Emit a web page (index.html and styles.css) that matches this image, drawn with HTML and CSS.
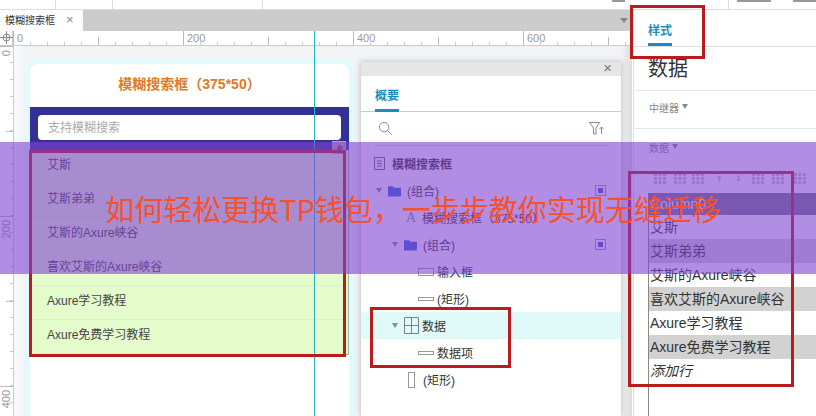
FILE: index.html
```html
<!DOCTYPE html>
<html lang="en">
<head>
  <meta charset="UTF-8" />
  <title>模糊搜索框</title>
  <link rel="stylesheet" href="styles.css">
</head>
<body>
  <svg class="defs" width="0" height="0">
    <symbol id="cells" viewBox="0 0 12 11">
      <path d="M0 0h3v3H0zM4.500 0h3v3h-3zM9 0h3v3H9zM0 4h3v3H0zM4.500 4h3v3h-3zM9 4h3v3H9zM0 8h3v3H0zM4.500 8h3v3h-3zM9 8h3v3H9z" fill="currentColor"/>
    </symbol>
    <symbol id="folder" viewBox="0 0 14 12">
      <path d="M0 1h5l2 1.500h7V12H0z" fill="#2f62d8"/>
    </symbol>
    <symbol id="marker" viewBox="0 0 11 11">
      <rect x="0.500" y="0.500" width="10" height="10" fill="#fff" stroke="#9a9ab0"/>
      <rect x="3" y="3" width="5" height="5" fill="#3d56c8"/>
    </symbol>
  </svg>

  <div class="topstrip">
    <i class="mark m1"></i><i class="mark m2"></i><i class="mark m3"></i>
  </div>

  <div class="workspace">

    <!-- editor side -->
    <div class="editor">
      <div class="tabbar">
        <div class="tab">模糊搜索框<span class="tab-close">×</span></div>
        <span class="tri tab-menu"></span>
      </div>
      <div class="hruler">
        <div class="corner">
          <svg width="13" height="13" viewBox="0 0 13 13"><circle cx="6.500" cy="6.500" r="3.500" fill="none" stroke="#888"/><path d="M6.500 0v13M0 6.500h13" stroke="#888"/></svg>
        </div>
        <div class="hseg">0</div>
        <div class="hseg">200</div>
        <div class="hseg">400</div>
        <div class="hseg">600</div>
      </div>
      <div class="canvas-row">
        <div class="vruler">
          <div class="vseg"><span>0</span></div>
          <div class="vseg"><span>200</span></div>
          <div class="vseg"><span>400</span></div>
        </div>
        <div class="stage">
          <div class="phone">
            <div class="phone-title">模糊搜索框（375*50）</div>
            <div class="searchbar">
              <div class="searchbox">支持模糊搜索</div>
            </div>
            <div class="rows">
              <div class="row">艾斯</div>
              <div class="row">艾斯弟弟</div>
              <div class="row">艾斯的Axure峡谷</div>
              <div class="row">喜欢艾斯的Axure峡谷</div>
              <div class="row">Axure学习教程</div>
              <div class="row">Axure免费学习教程</div>
            </div>
          </div>
        </div>
      </div>
    </div>

    <!-- style panel -->
    <div class="inspector">
      <div class="insp-tabs"><span class="insp-tab">样式</span></div>
      <div class="insp-title">数据</div>
      <div class="insp-section">中继器<span class="tri"></span></div>
      <div class="insp-data">
        <div class="insp-label">数据<span class="tri"></span></div>
        <div class="tools">
          <svg class="c1"><use href="#cells"/></svg>
          <svg class="c1"><use href="#cells"/></svg>
          <svg class="c2 tight"><use href="#cells"/></svg>
          <svg class="arrow" viewBox="0 0 9 12"><path d="M4.500 0L9 5H6v7H3V5H0z" fill="currentColor"/></svg>
          <svg class="arrow" viewBox="0 0 9 12"><path d="M4.500 12L9 7H6V0H3v7H0z" fill="currentColor"/></svg>
          <svg class="c1"><use href="#cells"/></svg>
          <svg class="c1"><use href="#cells"/></svg>
          <svg class="c2"><use href="#cells"/></svg>
          <svg class="c1"><use href="#cells"/></svg>
        </div>
        <div class="grid">
          <div class="grid-head">Column0</div>
          <div class="grid-row">艾斯</div>
          <div class="grid-row alt">艾斯弟弟</div>
          <div class="grid-row">艾斯的Axure峡谷</div>
          <div class="grid-row alt">喜欢艾斯的Axure峡谷</div>
          <div class="grid-row">Axure学习教程</div>
          <div class="grid-row alt">Axure免费学习教程</div>
          <div class="grid-row add">添加行</div>
        </div>
      </div>
    </div>
  </div>

  <!-- things lying over the page -->
  <div class="guide"></div>
  <div class="pin">
    <svg width="10" height="10" viewBox="0 0 10 10"><path d="M5 1l4 3-2 1-1 3-3-3 1-2zM3 7L1 9" fill="#6d5a66" stroke="#6d5a66"/></svg>
  </div>

  <div class="outline">
    <div class="outline-bar"><span class="outline-close">×</span></div>
    <div class="outline-tabs"><span class="outline-tab">概要</span></div>
    <div class="outline-search">
      <svg width="15" height="15" viewBox="0 0 16 16"><circle cx="6.500" cy="6.500" r="5" fill="none" stroke="#888"/><path d="M10.500 10.500l4.500 4.500" stroke="#888"/></svg>
      <svg width="15" height="13" viewBox="0 0 15 13"><path d="M0.500 0.500h10L7 6v6H4.500V6z" fill="none" stroke="#888"/><path d="M12.500 12V5M10.500 7l2-2 2 2" fill="none" stroke="#888"/></svg>
    </div>
    <div class="tree">
      <div class="node page">
        <svg class="ico" width="11" height="13" viewBox="0 0 11 13"><path d="M0.500 0.500h10v12H0.500zM3 4h5M3 6.500h5M3 9h5" fill="none" stroke="#666"/></svg>
        模糊搜索框
      </div>
      <div class="node d1"><span class="tri"></span><svg class="folder"><use href="#folder"/></svg>(组合)<svg class="marker"><use href="#marker"/></svg></div>
      <div class="node d2"><span class="letter">A</span>模糊搜索框（375*50）</div>
      <div class="node d3"><span class="tri"></span><svg class="folder"><use href="#folder"/></svg>(组合)<svg class="marker"><use href="#marker"/></svg></div>
      <div class="node d4"><span class="rect tall"></span>输入框</div>
      <div class="node d4"><span class="rect"></span>(矩形)</div>
      <div class="node d3 picked"><span class="tri"></span>
        <svg class="ico" width="15" height="17" viewBox="0 0 15 17"><path d="M0.500 0.500h14v16H0.500zM7.500 0.500v16M0.500 8.500h14" fill="none" stroke="#6f8585"/></svg>
        数据
      </div>
      <div class="node d4"><span class="rect"></span>数据项</div>
      <div class="node d1b"><span class="rect upright"></span>(矩形)</div>
    </div>
  </div>

  <div class="redbox box-rows"></div>
  <div class="redbox box-tree"></div>
  <div class="redbox box-tab"></div>
  <div class="redbox box-grid"></div>

  <div class="band">如何轻松更换TP钱包，一步步教你实现无缝迁移</div>
</body>
</html>
```

FILE: styles.css
```css
* {
  margin: 0;
  padding: 0;
  box-sizing: border-box;
}

html, body {
  width: 816px;
  height: 416px;
  overflow: hidden;
}

body {
  position: relative;
  background: #fff;
  color: #333;
  font-family: "Liberation Sans", "Noto Sans CJK SC", sans-serif;
  font-size: 12px;
}

.defs {
  position: absolute;
}

.tri {
  display: inline-block;
  width: 0;
  height: 0;
  border-left: 3px solid transparent;
  border-right: 3px solid transparent;
  border-top: 5px solid #888;
}

/* top strip */
.topstrip {
  position: relative;
  height: 10px;
  border-bottom: 1px solid #ddd;
  background:
    linear-gradient(#ddd, #ddd) 55px 0 / 1px 100% no-repeat,
    linear-gradient(#ddd, #ddd) 112px 0 / 1px 100% no-repeat,
    linear-gradient(#ddd, #ddd) 262px 0 / 1px 100% no-repeat,
    linear-gradient(#ddd, #ddd) 728px 0 / 1px 100% no-repeat;
}

.mark {
  position: absolute;
  top: 0;
  height: 2px;
  background: #999;
}

.m1 { left: 612px; width: 13px; }
.m2 { left: 737px; width: 34px; }
.m3 { left: 793px; width: 23px; }

.workspace {
  display: flex;
  height: 406px;
}

/* editor */
.editor {
  width: 632px;
  display: flex;
  flex-direction: column;
}

.tabbar {
  height: 21px;
  flex: none;
  display: flex;
  align-items: center;
  justify-content: space-between;
  background: #ccc;
  padding-right: 4px;
}

.tab {
  width: 83px;
  height: 21px;
  background: #fff;
  padding-left: 5px;
  font-size: 10px;
  line-height: 20px;
  color: #333;
}

.tab-close {
  margin-left: 11px;
  font-size: 13px;
  color: #888;
}

.tab-menu {
  border-left-width: 4px;
  border-right-width: 4px;
  border-top-color: #888;
}

.hruler {
  height: 15px;
  flex: none;
  display: flex;
  overflow: hidden;
  border-bottom: 1px solid #ccc;
  font-size: 11px;
  line-height: 14px;
  color: #999;
}

.corner {
  width: 13px;
  flex: none;
  border-right: 1px solid #ccc;
}

.hseg {
  width: 170px;
  flex: none;
  padding-left: 4px;
  background:
    linear-gradient(#bbb, #bbb) 0 0 / 1px 100% no-repeat,
    linear-gradient(#bbb, #bbb) 85px 6px / 1px 100% no-repeat,
    repeating-linear-gradient(90deg, #ccc 0 1px, transparent 1px 17px) 0 11px / 100% 4px no-repeat;
}

.canvas-row {
  flex: 1;
  display: flex;
  min-height: 0;
}

.vruler {
  width: 14px;
  flex: none;
  overflow: hidden;
  border-right: 1px solid #ccc;
  font-size: 11px;
  color: #999;
}

.vseg {
  height: 170px;
  padding-top: 4px;
  background:
    linear-gradient(#bbb, #bbb) 0 0 / 100% 1px no-repeat,
    linear-gradient(#bbb, #bbb) 6px 85px / 100% 1px no-repeat,
    repeating-linear-gradient(0deg, #ccc 0 1px, transparent 1px 17px) 10px 0 / 3px 100% no-repeat;
}

.vseg span {
  display: block;
  writing-mode: vertical-rl;
  transform: rotate(180deg);
  line-height: 12px;
}

.stage {
  flex: 1;
  min-width: 0;
  overflow: hidden;
  padding: 18px 0 0 16px;
  background: linear-gradient(90deg, #f9fafc, #f2f3f6 10px);
}

.phone {
  width: 319px;
  height: 400px;
  background: #fff;
  border-radius: 8px 8px 0 0;
  box-shadow: 0 0 0 5px #e0fbfb;
}

.phone-title {
  height: 43px;
  padding-top: 11px;
  text-align: center;
  font-size: 14px;
  font-weight: bold;
  line-height: 18px;
  color: #e17a25;
}

.searchbar {
  height: 43px;
  padding: 8px;
  background: #323296;
}

.searchbox {
  height: 25px;
  padding-left: 10px;
  background: #fff;
  border-radius: 4px;
  font-size: 12px;
  line-height: 26px;
  color: #aaa;
}

.rows {
  border: 1px solid #a8b0a0;
  border-top: none;
  border-left: none;
}

.row {
  height: 34px;
  padding-left: 17px;
  background: #e4fccc;
  border-bottom: 1px solid #dcf3c6;
  font-size: 12px;
  line-height: 30px;
  color: #444;
}

/* style panel */
.inspector {
  width: 184px;
  padding-left: 1px;
  background: linear-gradient(#ddd, #ddd) 1px 0 / 1px 100% no-repeat #fff;
  position: relative;
}

.inspector::before {
  content: "";
  position: absolute;
  left: -11px;
  top: 36px;
  bottom: 0;
  width: 11px;
  background: linear-gradient(90deg, #f2f3f6, #dcdcde);
}

.insp-tabs {
  height: 37px;
  padding: 12px 0 0 15px;
  border-bottom: 1px solid #ddd;
}

.insp-tab {
  display: inline-block;
  height: 24px;
  width: 24px;
  border-bottom: 3px solid #1a8dc0;
  font-size: 12px;
  font-weight: bold;
  line-height: 18px;
  color: #1a8dc0;
}

.insp-title {
  height: 44px;
  padding-left: 15px;
  border-bottom: 1px solid #e3e6ea;
  font-size: 20px;
  line-height: 44px;
  color: #333;
}

.insp-section {
  height: 38px;
  padding-left: 16px;
  border-bottom: 1px solid #e3e6ea;
  font-size: 10px;
  line-height: 36px;
  color: #888;
}

.insp-section .tri,
.insp-label .tri {
  margin: 0 0 3px 3px;
}

.insp-data {
  padding-left: 15px;
}

.insp-label {
  height: 39px;
  padding: 12px 0 0 1px;
  font-size: 10px;
  line-height: 16px;
  color: #888;
}

.tools {
  height: 25px;
  display: flex;
  gap: 8px;
  padding: 5px 0 0 6px;
  overflow: hidden;
  color: #c4c4c8;
}

.tools svg {
  flex: none;
  height: 11px;
}

.c1 { width: 12px; }
.c2 { width: 16px; }
.c2.tight { margin-left: -4px; }

.tools .arrow {
  width: 5px;
  margin: 0 3px;
}

.grid {
  height: 230px;
  border-left: 1px solid #888;
}

.grid-head {
  height: 22px;
  padding-left: 1px;
  background: #707a88;
  font-size: 14px;
  line-height: 22px;
  color: #fff;
}

.grid-row {
  height: 24px;
  padding-left: 1px;
  font-size: 14px;
  line-height: 24px;
  color: #333;
}

.grid-row.alt {
  background: #d2d2d2;
}

.grid-row.add {
  font-style: italic;
}

/* overlays */
.guide {
  position: absolute;
  left: 314px;
  top: 31px;
  bottom: 0;
  width: 1px;
  background: #2ab5c5;
}

.pin {
  position: absolute;
  left: 332px;
  top: 141px;
  width: 14px;
  height: 13px;
  padding: 2px;
  background: #b8a4a8;
}

.outline {
  position: absolute;
  left: 361px;
  top: 62px;
  width: 260px;
  height: 354px;
  background: #fff;
  box-shadow: 0 0 6px rgba(0, 0, 0, 0.25);
}

.outline-bar {
  height: 14px;
  background: #e6e6e6;
  text-align: right;
  padding-right: 9px;
  font-size: 15px;
  line-height: 12px;
  color: #777;
}

.outline-tabs {
  height: 36px;
  padding: 12px 0 0 14px;
  border-bottom: 1px solid #ccc;
}

.outline-tab {
  display: inline-block;
  width: 24px;
  height: 24px;
  border-bottom: 3px solid #1a8dc0;
  font-size: 12px;
  font-weight: bold;
  line-height: 17px;
  color: #1a8dc0;
}

.outline-search {
  height: 34px;
  margin: 0 14px;
  padding: 9px 0 0 3px;
  border-bottom: 1px solid #ccc;
  display: flex;
  justify-content: space-between;
}

.outline-search svg:last-child {
  margin-right: 3px;
  margin-top: 1px;
}

.tree {
  padding-top: 3px;
}

.node {
  position: relative;
  display: flex;
  align-items: center;
  height: 27px;
  font-size: 12px;
  color: #333;
}

.node .tri {
  margin-right: 6px;
}

.page {
  padding-left: 13px;
  font-weight: bold;
  height: 28px;
}

.page .ico {
  margin-right: 7px;
}

.d1 { padding-left: 15px; }
.d2 { padding-left: 45px; }
.d3 { padding-left: 31px; }
.d4 { padding-left: 57px; }
.d1b { padding-left: 47px; }

.folder {
  width: 13px;
  height: 12px;
  margin-right: 6px;
}

.marker {
  position: absolute;
  left: 234px;
  top: 8px;
  width: 11px;
  height: 11px;
}

.letter {
  width: 16px;
  font-family: "Liberation Serif", serif;
  font-size: 14px;
  color: #888;
}

.picked {
  background: #e0fafa;
}

.picked .ico {
  margin-right: 3px;
}

.rect {
  width: 16px;
  height: 4px;
  margin-right: 3px;
  border: 1px solid #999;
}

.rect.tall {
  height: 8px;
}

.rect.upright {
  width: 7px;
  height: 16px;
  margin-right: 8px;
}

.redbox {
  position: absolute;
  border: 3px solid #b81c1c;
}

.box-rows { left: 29px; top: 150px; width: 317px; height: 207px; }
.box-tree { left: 370px; top: 307px; width: 141px; height: 61px; }
.box-tab { left: 630px; top: 5px; width: 75px; height: 54px; }
.box-grid { left: 628px; top: 171px; width: 166px; height: 216px; }

.band {
  position: absolute;
  left: 0;
  top: 142px;
  width: 816px;
  height: 132px;
  padding-left: 10px;
  display: flex;
  align-items: center;
  justify-content: center;
  background: rgba(127, 65, 210, 0.6);
  font-family: "Noto Sans CJK SC", "Liberation Sans", sans-serif;
  font-size: 29px;
  color: #f4512c;
}
```
